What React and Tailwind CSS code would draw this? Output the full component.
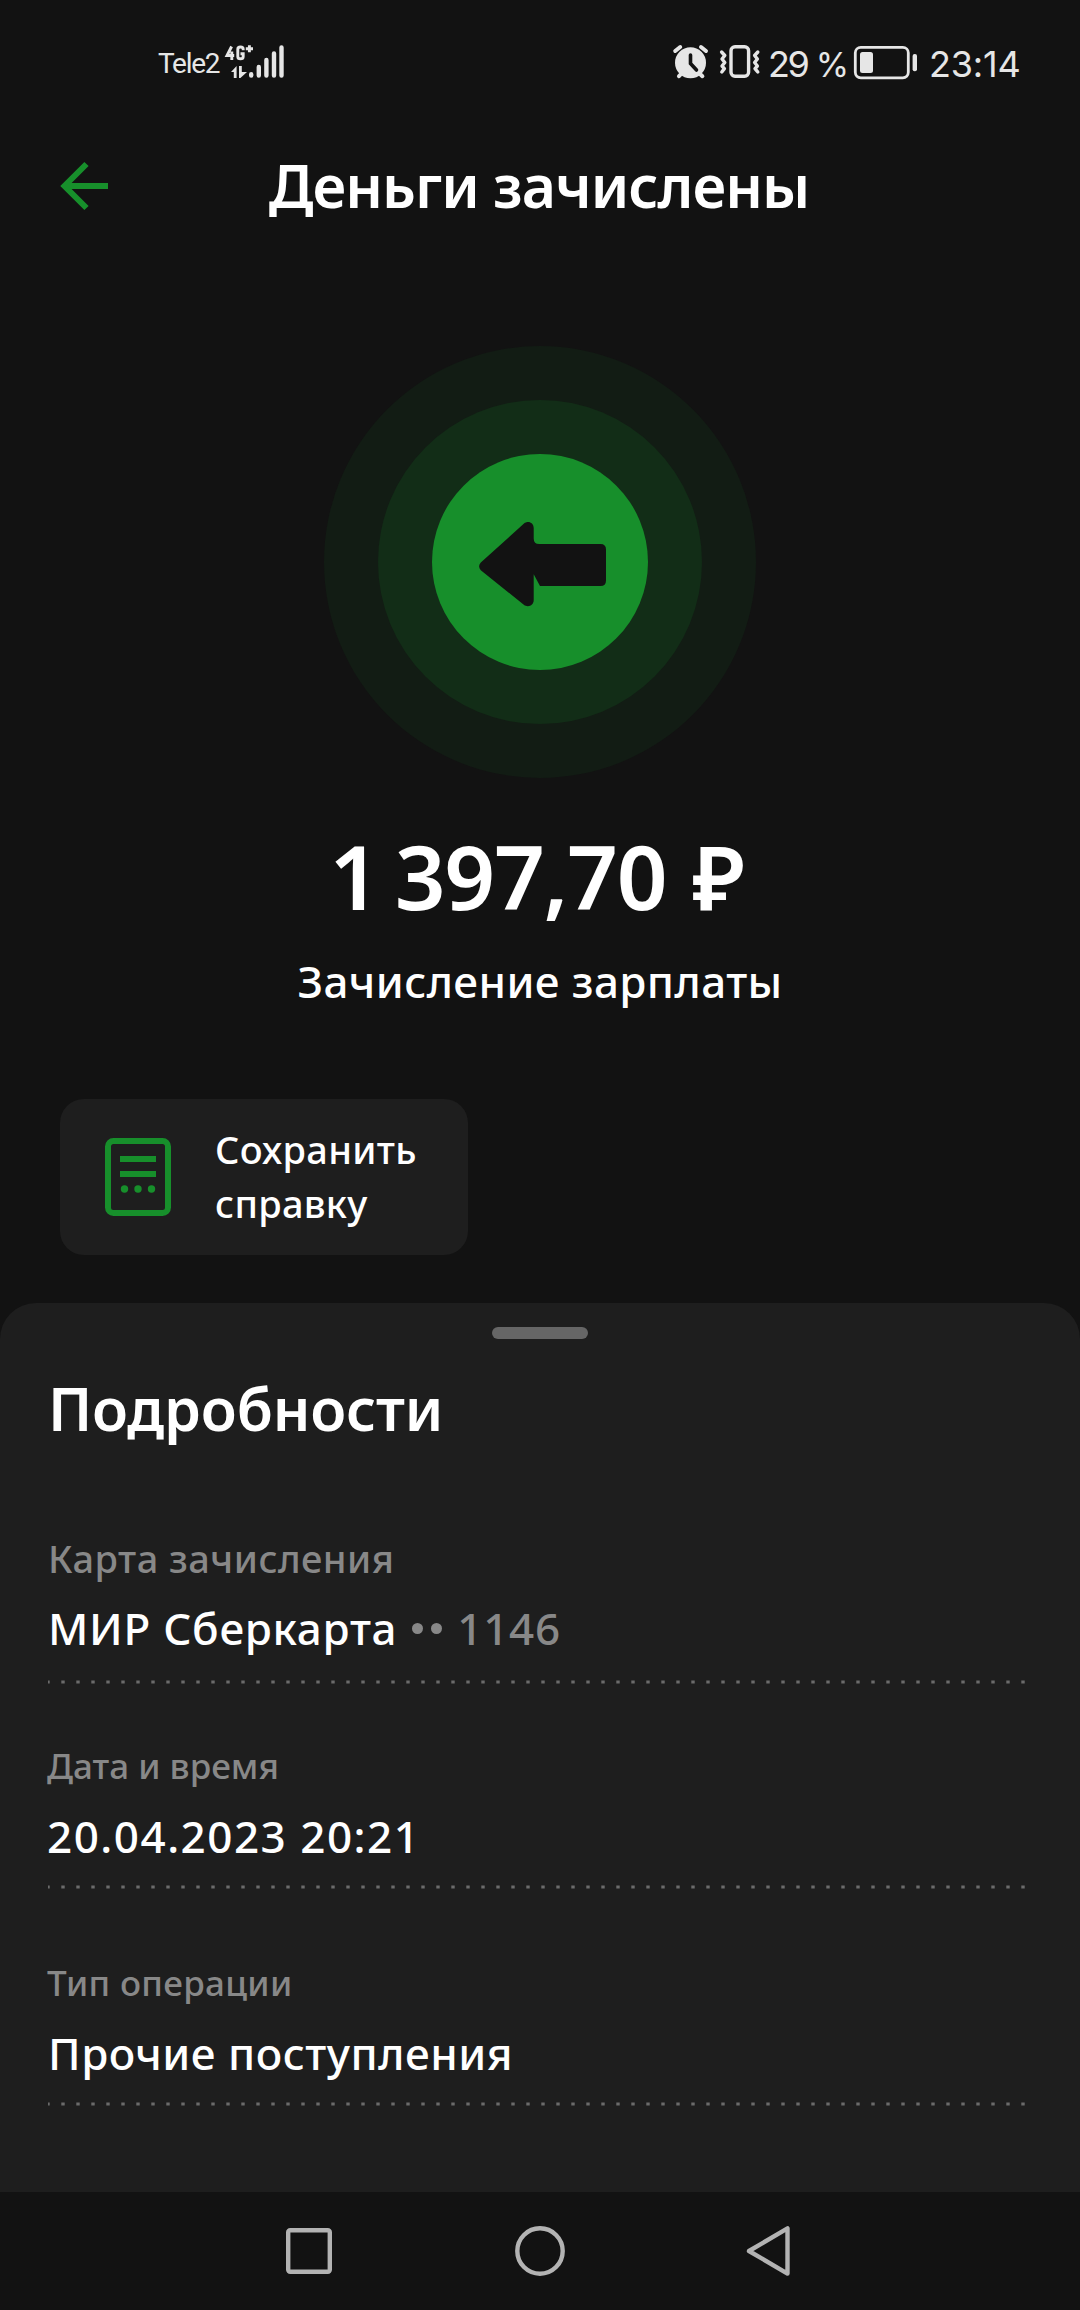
import React from "react";

const details = [
  {
    label: "Карта зачисления",
    value: "МИР Сберкарта",
    card: "1146",
    block: "pt-[80px] h-[231px]",
    labelStyle: "text-[38px] tracking-[0.45px]",
    valueStyle: "mt-[15px] tracking-[0.7px]",
  },
  {
    label: "Дата и время",
    value: "20.04.2023 20:21",
    block: "pt-[57px] h-[205px]",
    labelStyle: "-ml-px text-[35px]",
    valueStyle: "mt-[15px] -ml-px tracking-[1.5px]",
  },
  {
    label: "Тип операции",
    value: "Прочие поступления",
    block: "pt-[69px] h-[217px]",
    labelStyle: "-ml-px text-[35px] tracking-[0.3px]",
    valueStyle: "mt-[15px] tracking-[0.5px]",
  },
];

function SignalIcon() {
  return (
    <svg className="mt-[44px] ml-[4px] h-[36px] w-[60px]" viewBox="0 0 60 36" fill="none" stroke="#e6e6e6">
      <g strokeWidth="2.9">
        <path d="M7.6 2.5L3 11.5H10.2M7.8 7.5V16" />
        <path d="M19.2 6.2V5.2C19.2 2.2 13.8 2.2 13.8 5.2V12.4C13.8 15.6 19.2 15.6 19.2 12.4V9.8H16.5" />
        <path d="M25.4 1.2V8.2M21.8 4.7H29" />
      </g>
      <path d="M7 28L12.6 22V34H9.8V28ZM15 22H17.8V28H23L16.4 34H15Z" fill="#e6e6e6" stroke="none" />
      <g strokeWidth="4.4" strokeLinecap="round">
        <path d="M27.2 30.2V31.6M34.8 23V31.6M42.4 16V31.6M50 9.4V31.6M57.5 3.4V31.6" />
      </g>
    </svg>
  );
}

function AlarmIcon() {
  return (
    <svg className="mt-[44px] h-[36px] w-[37px]" viewBox="0 0 37 36">
      <g stroke="#e6e6e6" strokeWidth="4" strokeLinecap="round">
        <path d="M3.2 7L8.2 3M34 7L29 3M7 32.2L10 29M30.4 32.2L27 29" />
      </g>
      <circle cx="18.5" cy="18.8" r="15.5" fill="#e6e6e6" />
      <path d="M18.5 11V19.5L24.5 26" fill="none" stroke="#121212" strokeWidth="3.6" strokeLinecap="round" />
    </svg>
  );
}

function VibrateIcon() {
  return (
    <svg className="mt-[44px] ml-[10px] h-[36px] w-[42px]" viewBox="0 0 42 36" fill="none" stroke="#e6e6e6" strokeWidth="3.4" strokeLinecap="round" strokeLinejoin="round">
      <rect x="12" y="2.7" width="17.6" height="29.6" rx="4" />
      <path d="M2.6 8L5.8 11.5L3 15L5.8 18.5L3 22L5.4 24.6L2.8 28" />
      <path d="M38.8 8L35.6 11.5L38.4 15L35.6 18.5L38.4 22L36 24.6L38.8 28" />
    </svg>
  );
}

function BatteryIcon() {
  return (
    <svg className="mt-[44px] ml-[7px] h-[36px] w-[66px]" viewBox="0 0 66 36">
      <rect x="2.3" y="3.3" width="53" height="30.5" rx="5.5" fill="none" stroke="#e6e6e6" strokeWidth="2.8" />
      <rect x="7" y="8" width="13" height="21" rx="2.5" fill="#e6e6e6" />
      <rect x="59.6" y="10" width="4.4" height="17.2" rx="2" fill="#e6e6e6" />
    </svg>
  );
}

function StatusBar() {
  return (
    <div className="flex h-[124px] items-start font-['Roboto',sans-serif] text-[#e6e6e6]">
      <span className="ml-[158px] mt-[44px] w-[62px] whitespace-nowrap text-[28px] leading-[40px] tracking-[-0.045em]">Tele2</span>
      <SignalIcon />
      <div className="ml-auto mr-[59px] flex items-start">
        <AlarmIcon />
        <VibrateIcon />
        <span className="ml-[7px] mt-[44px] w-[78px] whitespace-nowrap font-['Inter',sans-serif] text-[36px] leading-[40px] tracking-[-0.07em]">
          29 <span className="ml-px text-[34px]">%</span>
        </span>
        <BatteryIcon />
        <span className="ml-[10px] mt-[44px] w-[92px] whitespace-nowrap font-['Inter',sans-serif] text-[36px] leading-[40px] tracking-[-0.005em]">23:14</span>
      </div>
    </div>
  );
}

function Header() {
  return (
    <div className="relative flex h-[124px] justify-center">
      <svg className="absolute left-[58px] top-[36px] h-[52px] w-[52px]" viewBox="0 0 52 52" fill="none" stroke="#178f2b" strokeWidth="6">
        <path d="M50 26H6M28.5 4L6.5 26L28.5 48" />
      </svg>
      <h1 className="mt-[21px] whitespace-nowrap pr-[2px] text-[59px] font-semibold leading-[80px] tracking-[-1px]">Деньги зачислены</h1>
    </div>
  );
}

function Badge() {
  return (
    <div className="mx-auto mt-[98px] flex size-[432px] items-center justify-center rounded-full bg-[#121c14]">
      <div className="flex size-[324px] items-center justify-center rounded-full bg-[#122d17]">
        <div className="flex size-[216px] items-center justify-center rounded-full bg-[#178f2b]">
          <svg className="size-[216px]" viewBox="108 108 216 216" fill="#121212">
            <path d="M156.8 216.4L200 177.6C204 174.2 209.7 176.6 209.7 182V192.5Q209.7 198 215.2 198H276.5Q282 198 282 203.5V234.5Q282 240 276.5 240H216L209.7 228.3V254C209.7 259.6 204 262 199.8 258.8L156.8 224.2Q153.4 220.3 156.8 216.4Z" />
          </svg>
        </div>
      </div>
    </div>
  );
}

function SaveButton() {
  return (
    <button className="ml-[60px] mt-[83px] flex h-[156px] w-[408px] items-center rounded-[24px] bg-[#1e1e1e] pl-[45px] text-left">
      <svg className="h-[78px] w-[66px]" viewBox="0 0 66 78" fill="none" stroke="#178f2b" strokeWidth="6">
        <rect x="3" y="3" width="60" height="72" rx="5.5" />
        <path d="M15 21H51M15 36H51" />
        <g fill="#178f2b" stroke="none">
          <circle cx="19.5" cy="51" r="3.7" />
          <circle cx="33" cy="51" r="3.7" />
          <circle cx="46.5" cy="51" r="3.7" />
        </g>
      </svg>
      <span className="-mt-[2px] ml-[44px] text-[38px] font-medium leading-[54px] tracking-[0.3px]">
        Сохранить
        <br />
        справку
      </span>
    </button>
  );
}

function DottedLine() {
  return (
    <svg className="mt-auto h-[4px] w-[978px]" viewBox="0 0 978 4">
      <path d="M-1.7 2H978" stroke="#6b6b6b" strokeWidth="3" strokeDasharray="3.4 11.6" />
    </svg>
  );
}

function NavBar() {
  return (
    <div className="flex h-[118px] items-center justify-center gap-[179px] bg-[#121212]">
      <svg className="size-[52px]" viewBox="0 0 52 52" fill="none" stroke="#b3b3b3" strokeWidth="4.4">
        <rect x="5.2" y="5.2" width="41.6" height="41.6" rx="2" />
      </svg>
      <svg className="size-[52px]" viewBox="0 0 52 52" fill="none" stroke="#b3b3b3" strokeWidth="4.4">
        <circle cx="26" cy="26" r="22.7" />
      </svg>
      <svg className="size-[52px]" viewBox="0 0 52 52" fill="none" stroke="#b3b3b3" strokeWidth="4.4" strokeLinejoin="round">
        <path d="M42.5 3.4V48.6L4 26Z" />
      </svg>
    </div>
  );
}

export default function App() {
  return (
    <div className="flex h-[2310px] w-[1080px] flex-col overflow-hidden bg-[#121212] font-['Noto_Sans',sans-serif] text-white">
      <StatusBar />
      <Header />
      <Badge />
      <div className="mt-[48px] text-center">
        <p className="whitespace-nowrap pr-[7px] text-[89px] font-semibold leading-[100px] tracking-[-1.3px]">
          1 <span className="-ml-[6px]">397,70</span> <span className="ml-[4px]">₽</span>
        </p>
        <p className="mt-[21px] whitespace-nowrap text-[44px] font-medium leading-[69px] tracking-[0.4px]">Зачисление зарплаты</p>
      </div>
      <SaveButton />
      <div className="mt-[48px] h-[889px] rounded-t-[36px] bg-[#1e1e1e] px-[48px]">
        <div className="h-[60px] pt-[24px]">
          <div className="mx-auto h-[12px] w-[96px] rounded-full bg-[#666666]"></div>
        </div>
        <h2 className="whitespace-nowrap pt-[1px] text-[59px] font-semibold leading-[89px] tracking-[-0.2px]">Подробности</h2>
        {details.map((item) => (
          <div key={item.label} className={`flex flex-col ${item.block}`}>
            <p className={`whitespace-nowrap font-medium leading-[50px] text-[#888888] ${item.labelStyle}`}>{item.label}</p>
            <div className={`flex items-center whitespace-nowrap text-[44px] font-medium leading-[60px] ${item.valueStyle}`}>
              <span>{item.value}</span>
              {item.card && (
                <>
                  <span className="ml-[15px] size-[11px] rounded-full bg-[#888888]"></span>
                  <span className="ml-[8px] size-[11px] rounded-full bg-[#888888]"></span>
                  <span className="ml-[15px] text-[#888888]">{item.card}</span>
                </>
              )}
            </div>
            <DottedLine />
          </div>
        ))}
      </div>
      <NavBar />
    </div>
  );
}
